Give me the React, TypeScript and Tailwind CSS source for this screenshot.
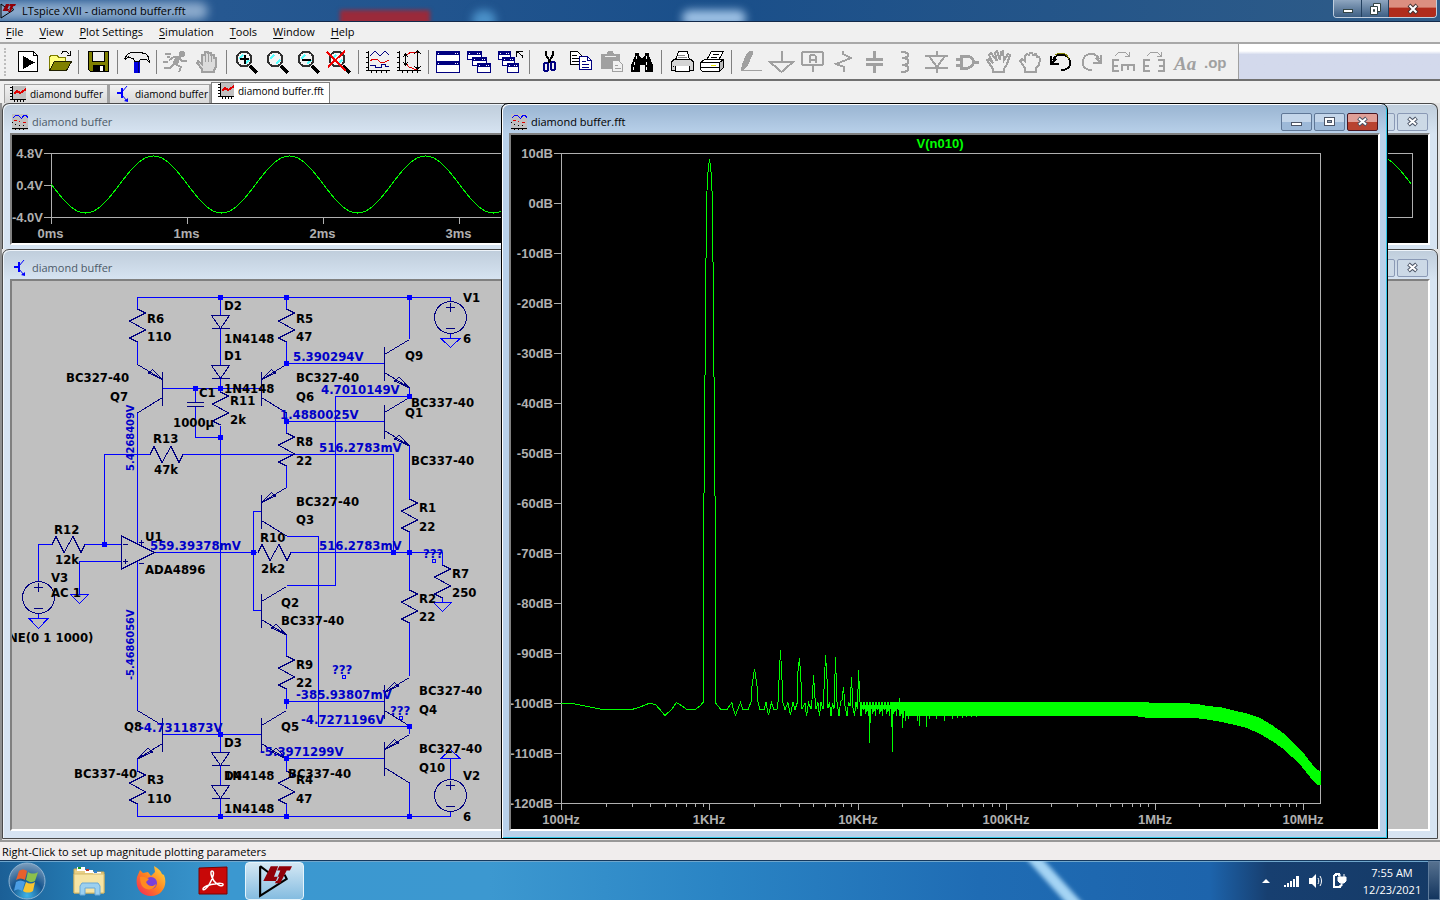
import type { ReactNode } from "react";
import clsx from "clsx";

const G = "#a0a0a0";
const NAVY = "#000080";

const menus = ["File", "View", "Plot Settings", "Simulation", "Tools", "Window", "Help"];

/* ---------- toolbar icons, drawn on a 31x24 grid ---------- */

const lens = (
  <>
    <path d="M20 16l7 7" stroke="#000" strokeWidth="3" />
    <circle cx="14" cy="9" r="7.5" fill="#f4f4f4" stroke="#303030" strokeWidth="2" />
    <path d="M9 9l4-4M15 14l4-4" stroke="#5ff" strokeWidth="2" />
  </>
);

const axes = (
  <path
    d="M6.5 1v20M4 2.5h3M4 7.5h3M4 12.5h3M4 17.5h3M4 20.5h24M9.5 20v3M14.5 20v3M19.5 20v3M24.5 20v3"
    stroke="#000"
    fill="none"
  />
);

const miniWindow = (x: number, y: number, w: number, h: number) => (
  <>
    <rect x={x + 0.5} y={y + 0.5} width={w - 1} height={h - 1} fill="#fff" stroke={NAVY} />
    <rect x={x} y={y} width={w} height="4" fill={NAVY} />
    <path d={`M${x + 2} ${y + 2.5}h1M${x + w - 5} ${y + 2.5}h1M${x + w - 3} ${y + 2.5}h1`} stroke="#fff" />
  </>
);

type Tool = { name: string; icon: ReactNode; off?: boolean };

const tools: Tool[][] = [
  [
    {
      name: "Run",
      icon: (
        <>
          <path d="M6.5 1.5h15l4 4v16h-19z" fill="#fff" stroke="#000" />
          <path d="M21.5 1.5v4h4" fill="none" stroke="#000" />
          <path d="M11 6l12 6.500-12 6.500z" fill="#000" />
        </>
      ),
    },
    {
      name: "Open",
      icon: (
        <>
          <path d="M6.500 19V7l2-2h5l2 2h7v4" fill="#ffff80" stroke="#7c7c00" />
          <path d="M6.500 20.500l5-9h17l-5 9z" fill="#808000" stroke="#202000" />
          <path d="M18 4c2-4 6-3 8 0M27.500 1v4h-4" fill="none" stroke="#000" />
        </>
      ),
    },
  ],
  [
    {
      name: "Save",
      icon: (
        <>
          <path d="M6.500 1.500h20v20h-18l-2-2z" fill="#808000" stroke="#000" />
          <rect x="10.500" y="1.500" width="12" height="10" fill="#f0f0f0" stroke="#000" />
          <rect x="11" y="15" width="12" height="6" fill="#000" />
          <rect x="18" y="16" width="3" height="5" fill="#fff" />
        </>
      ),
    },
  ],
  [
    {
      name: "Control Panel",
      icon: (
        <>
          <path d="M13 10h6v13h-6z" fill="#0000e0" />
          <path d="M17.500 10v13" stroke="#000070" />
          <path d="M3.500 8.500l3-4 4-2.500h8l3 1h3l3 4 1 5-4-3h-5l-1 2h-5l-1-2-5-2-3 2z" fill="#ececec" stroke="#000" />
        </>
      ),
    },
  ],
  [
    {
      name: "Run simulation",
      off: true,
      icon: (
        <>
          <path d="M13 7l6 0-4 7 6 3-2 5M15 13l-5 5H4M19 7l3 4h5M14 7l-5 3M5 4h6M7 7h3M3 12h5" fill="none" stroke={G} strokeWidth="2" />
          <circle cx="22" cy="4" r="3" fill={G} />
          <path d="M16 7l4 1-3 7-4-2z" fill={G} stroke={G} />
        </>
      ),
    },
    {
      name: "Halt",
      off: true,
      icon: (
        <>
          <path d="M11 22v-3l-5-6 1-2 4 3V5h3V2h3v1h3v2h3v3h2v9l-2 3v2z" fill="#dcdcdc" stroke={G} strokeWidth="2" />
          <path d="M14 5v7M17 4v8M20 6v6" stroke={G} />
        </>
      ),
    },
  ],
  [
    {
      name: "Zoom in",
      icon: (
        <>
          {lens}
          <path d="M10 9h9M14.500 5v9" stroke="#000" strokeWidth="2" />
        </>
      ),
    },
    { name: "Pan", icon: lens },
    {
      name: "Zoom out",
      icon: (
        <>
          {lens}
          <path d="M10 10h9" stroke="#000" strokeWidth="2" />
        </>
      ),
    },
    {
      name: "Zoom full",
      icon: (
        <>
          {lens}
          <path d="M4 2l19 19M22 1L5 17" stroke="#f00000" strokeWidth="2" />
        </>
      ),
    },
  ],
  [
    {
      name: "Autorange",
      icon: (
        <>
          {axes}
          <path d="M8 6l5-5 5 5 5-5 4 4" fill="none" stroke={NAVY} />
          <path d="M8 11l3-2h4l3 3h5l4-2" fill="none" stroke="#e00000" />
          <path d="M8 15.500h5v2h6v-3h4v2h4" fill="none" stroke={NAVY} />
        </>
      ),
    },
    {
      name: "Autorange Y",
      icon: (
        <>
          {axes}
          <path d="M12 6l6-4h8M12 12l4 5 8 3" fill="none" stroke="#e00000" strokeWidth="1" />
          <path d="M12.500 5v9M10 7l2.500-3 2.500 3M10 12l2.500 3 2.500-3M24.500 1v18M21 4l3.500-3 3.500 3M21 16l3.500 3 3.500-3" fill="none" stroke="#000" />
        </>
      ),
    },
  ],
  [
    {
      name: "Tile windows",
      icon: (
        <>
          {miniWindow(4, 1, 24, 11)}
          {miniWindow(4, 11, 24, 12)}
        </>
      ),
    },
    {
      name: "Cascade windows",
      icon: (
        <>
          {miniWindow(4, 1, 15, 9)}
          {miniWindow(9, 7, 15, 9)}
          {miniWindow(14, 13, 14, 10)}
        </>
      ),
    },
    {
      name: "Close windows",
      icon: (
        <>
          {miniWindow(4, 1, 13, 9)}
          {miniWindow(8, 7, 13, 9)}
          {miniWindow(13, 13, 12, 10)}
          <path d="M28.500 8v-2l-5-4M22.500 7V1.500h6" fill="none" stroke="#000" />
        </>
      ),
    },
  ],
  [
    {
      name: "Cut",
      icon: (
        <>
          <path d="M13 1v4l5 8M20 1v4l-5 8" fill="none" stroke="#000" strokeWidth="2" />
          <ellipse cx="13" cy="17" rx="2.500" ry="4" fill="none" stroke={NAVY} strokeWidth="2" />
          <ellipse cx="20" cy="16" rx="2.500" ry="4" fill="none" stroke={NAVY} strokeWidth="2" />
        </>
      ),
    },
    {
      name: "Copy",
      icon: (
        <>
          <path d="M6.500 1.500h7l4 4v9h-11z" fill="#fff" stroke="#000" />
          <path d="M8 5.500h5M8 8.500h7M8 11.500h7" stroke="#000" />
          <path d="M15.500 6.500h8l4 4v9h-12z" fill="#fff" stroke={NAVY} />
          <path d="M23.500 6.500v4h4M18 11.500h4M18 14.500h7M18 17h7" fill="none" stroke={NAVY} />
        </>
      ),
    },
    {
      name: "Paste",
      off: true,
      icon: (
        <>
          <path d="M6 4h6l1-3h5l1 3h6v15H6z" fill={G} />
          <path d="M10 6h11" stroke="#f0f0f0" />
          <path d="M17.500 10.500h6l4 4v7h-10z" fill="#f0f0f0" stroke={G} />
          <path d="M20 15.500h3M20 18.500h6" stroke={G} />
        </>
      ),
    },
    {
      name: "Find",
      icon: (
        <>
          <path d="M9 3h4v3h1l2 3 2-3h1V3h4v3l4 9v7h-8v-7h-5v7H5v-7l4-9z" fill="#000" />
          <path d="M10 2h3M20 2h3M10.500 6v3M8.500 12v3M7.500 17v3M20.500 6v3M20.500 12v3M20.500 17v3" stroke="#fff" strokeWidth="1" />
        </>
      ),
    },
  ],
  [
    {
      name: "Print setup",
      icon: (
        <>
          <path d="M10.500 10l3-8.500h9l2 8.500" fill="#fff" stroke="#000" />
          <path d="M6.500 12l3-3h16l3 3v8h-22z" fill="#d4d4d4" stroke="#000" />
          <path d="M9 16.500h-1M10.500 16v5.500h14V16" fill="#fff" stroke="#000" />
          <path d="M13 5h7M13 7h9" stroke="#888" />
        </>
      ),
    },
    {
      name: "Print",
      icon: (
        <>
          <path d="M10.500 10l5-8.500h12l-5 8.500" fill="#fff" stroke="#000" />
          <path d="M17 4.500h6M15 7h6" stroke="#000" />
          <path d="M4.500 12.500l4-3h19l-4 3z" fill="#fff" stroke="#000" />
          <path d="M4.500 12.500h19v9h-17l-2-2z" fill="#fff" stroke="#000" />
          <path d="M23.500 12.500l4-3v8l-4 4z" fill="#bbb" stroke="#000" />
          <path d="M4.500 17.500h19" stroke="#000" />
          <path d="M15 15.500h5" stroke="#e8e800" />
        </>
      ),
    },
  ],
  [
    {
      name: "Wire",
      off: true,
      icon: (
        <>
          <path d="M6 20l1-6 5-11 2-2h4v3l-5 11-5 5z" fill={G} />
          <path d="M6 20.500h21" stroke={G} />
        </>
      ),
    },
    { name: "Ground", off: true, icon: <path d="M15.500 1v11M4 12h23L15.500 22z" fill="none" stroke={G} strokeWidth="2" /> },
    {
      name: "Label net",
      off: true,
      icon: (
        <>
          <rect x="5" y="2" width="21" height="13" rx="2" fill="none" stroke={G} strokeWidth="2" />
          <path d="M15.500 15v7M12.500 13V6l2-1h3l1 1v7M12 9.500h7" fill="none" stroke={G} strokeWidth="2" />
        </>
      ),
    },
    { name: "Resistor", off: true, icon: <path d="M15 1v3l8 4-15 6 8 3v5" fill="none" stroke={G} strokeWidth="2" /> },
    { name: "Capacitor", off: true, icon: <path d="M15.500 1v8M7 9.500h17M7 14.500h17M15.500 15v8" fill="none" stroke={G} strokeWidth="3" /> },
    {
      name: "Inductor",
      off: true,
      icon: <path d="M11 2h4l3 2v2l-3 2h-3h3l3 2v3l-3 2h-3h3l3 2v3l-3 2h-4" fill="none" stroke={G} strokeWidth="2" />,
    },
    {
      name: "Diode",
      off: true,
      icon: <path d="M4 5.500h23M8 6l8 11 8-11M4 17.500h23M15.500 1v5M15.500 17v6" fill="none" stroke={G} strokeWidth="2" />,
    },
    {
      name: "Component",
      off: true,
      icon: <path d="M9 6h7l4 2 2 4-2 4-4 2H9zM4 9h5M4 15h5M22 12h5" fill="none" stroke={G} strokeWidth="3" />,
    },
    {
      name: "Move",
      off: true,
      icon: <path d="M10 22v-3L4 10l2-1 4 4-4-8 2-2 6 8-2-8 2-2 3 9 1-8 2-1 1 9 4-6 2 1-3 9-3 5v3z" fill="none" stroke={G} strokeWidth="2" />,
    },
    {
      name: "Drag",
      off: true,
      icon: <path d="M11 22v-4l-5-7 2-2 3 2V6l2-2 2 1 1-2h2l1 2 3-1 1 3 2 0 1 2-1 6-3 3v4z" fill="none" stroke={G} strokeWidth="2" />,
    },
    {
      name: "Undo",
      icon: (
        <>
          <path d="M8 10c3-8 17-7 17 3 0 5-4 7-9 7" fill="none" stroke="#000" strokeWidth="2" />
          <path d="M10 5c4-3 12-3 14 4" fill="none" stroke="#808000" />
          <path d="M6 6v8h8M6 14l5-5" fill="none" stroke="#000" strokeWidth="2" />
        </>
      ),
    },
    {
      name: "Redo",
      off: true,
      icon: <path d="M23 9C20 1 6 2 7 13c0 5 4 7 9 7M25 5v8h-8M25 13l-5-5" fill="none" stroke={G} strokeWidth="2" />,
    },
    {
      name: "Mirror",
      off: true,
      icon: (
        <>
          <path d="M12 10H6v11h6M6 16h5M15 21v-6h12v6M21 15v5" fill="none" stroke={G} strokeWidth="2" />
          <path d="M8 6l4-4h6l4 4M22 2v4h-4" fill="none" stroke={G} />
        </>
      ),
    },
    {
      name: "Rotate",
      off: true,
      icon: (
        <>
          <path d="M12 10H6v11h6M6 16h5M20 10h6v11h-6M26 16h-5" fill="none" stroke={G} strokeWidth="2" />
          <path d="M9 6l4-4h6l4 4M23 2v4h-4" fill="none" stroke={G} />
        </>
      ),
    },
    {
      name: "Text",
      off: true,
      icon: (
        <text x="5" y="20" fontFamily="Liberation Serif, serif" fontSize="19" fontStyle="italic" fontWeight="bold" fill={G}>
          Aa
        </text>
      ),
    },
    {
      name: "SPICE directive",
      off: true,
      icon: (
        <text x="4" y="18" fontFamily="Liberation Sans, sans-serif" fontSize="15" fontWeight="bold" fill={G}>
          .op
        </text>
      ),
    },
  ],
];

/* ---------- small icons ---------- */

function TabPlotIcon() {
  return (
    <svg width="16" height="16" viewBox="0 0 16 16" shapeRendering="crispEdges" className="shrink-0">
      <path d="M2 0h14v14H2z" fill="#c0c0c0" />
      <path d="M2.500 0v14M0 1.500h3M0 4.500h3M0 7.500h3M0 10.500h3M0 13.500h16M4.500 14v2M7.500 14v2M10.500 14v2M13.500 14v2" stroke="#000" />
      <path d="M4 8l3-3 3 2 2-1 4-3" fill="none" stroke="#e00000" strokeWidth="2" />
    </svg>
  );
}

function PlotIcon() {
  return (
    <svg width="16" height="16" viewBox="0 0 16 16" shapeRendering="crispEdges" className="shrink-0">
      <path d="M0 0h16v16H0z" fill="#c0c0c0" />
      <path d="M1 4l3-3h2l3 3h1l2-3h2l2 3" fill="none" stroke="#0000ff" />
      <path d="M2 6.500h3M7 7.500h1M11 8.500h3" stroke="#e00000" />
      <path d="M0 8.500h1M3 10.500h1M7 11.500h1M11 11.500h1M0 14.500h16M3.500 15v1M7.500 15v1M11.500 15v1" stroke="#000" />
    </svg>
  );
}

function SchematicIcon() {
  return (
    <svg width="16" height="16" viewBox="0 0 16 16" className="shrink-0">
      <path d="M2 7h5M7 2v10" stroke="#0000ff" strokeWidth="2" />
      <path d="M7 6l5-6M7 9l5 6" fill="none" stroke="#0000ff" strokeWidth="1" />
      <path d="M13 16v-4l-4 3z" fill="#0000ff" />
    </svg>
  );
}

function LtLogo({ size }: { size: number }) {
  return (
    <svg width={size} height={size} viewBox="0 0 32 32" className="shrink-0">
      <path d="M2 2v28l25-16-2-4M2 2l8 6" fill="none" stroke="#000" strokeWidth="2" />
      <path d="M12 2L5 16h13l2-4h-5l4-10zM20 2h12l-2 4h-3l-6 12h-5l5-12h-3z" fill="#900008" />
    </svg>
  );
}

/* ---------- document windows ---------- */

const glyphs = {
  min: <rect x="10.500" y="9.500" width="10" height="3" fill="#fff" stroke="#4c5566" />,
  max: (
    <>
      <rect x="10.500" y="4.500" width="10" height="8" fill="#fff" stroke="#4c5566" />
      <rect x="13.500" y="7.500" width="4" height="2" fill="#9ab" stroke="#4c5566" />
    </>
  ),
  close: (
    <>
      <path d="M11.500 5l8 7M19.500 5l-8 7" stroke="#4c5566" strokeWidth="4" />
      <path d="M12 5.500l7 6M19 5.500l-7 6" stroke="#fff" strokeWidth="2" />
    </>
  ),
};

function CaptionButton({ kind, active }: { kind: keyof typeof glyphs; active?: boolean }) {
  return (
    <button
      aria-label={kind}
      className={clsx(
        "flex h-[18px] w-[31px] items-center justify-center rounded-[2px] border",
        !active && "border-[#8a99b5] bg-[#ccd9e6]",
        active && kind === "close" && "border-[#4a1520] bg-gradient-to-b from-[#e0a098] from-50% to-[#b84330] to-50%",
        active && kind !== "close" && "border-[#5f7796] bg-gradient-to-b from-[#c4d6ea] from-50% to-[#9db9d8] to-50%"
      )}
    >
      <svg width="31" height="17" viewBox="0 0 31 17" className="shrink-0">
        {glyphs[kind]}
      </svg>
    </button>
  );
}

type DocProps = {
  title: string;
  icon: ReactNode;
  active?: boolean;
  dark?: boolean;
  className?: string;
  children: ReactNode;
};

function DocWindow({ title, icon, active, dark, className, children }: DocProps) {
  return (
    <section
      className={clsx(
        "flex flex-col rounded-t-[7px] border px-[7px]",
        active
          ? "border-black bg-[#b9d1ea] bg-gradient-to-b from-[#99b4d1] to-[#b9d1ea] to-[30px] shadow-[inset_1px_1px_0_#fff,inset_-1px_-1px_0_#30c8e8]"
          : "border-[#4a4a4a] bg-gradient-to-b from-[#bfcddb] to-[#d7e4f2] to-[30px] shadow-[inset_1px_1px_0_#eef4fa]",
        className
      )}
    >
      <header className="flex h-[29px] shrink-0 items-center gap-1 px-0.5 pt-1.5">
        {icon}
        <h2 className={clsx("flex-1 text-[11px] leading-4", active ? "text-black" : "text-[#4c5a68]")}>{title}</h2>
        <div className="flex gap-0.5">
          <CaptionButton kind="min" active={active} />
          <CaptionButton kind="max" active={active} />
          <CaptionButton kind="close" active={active} />
        </div>
      </header>
      <div
        className={clsx(
          "min-h-0 flex-1 overflow-hidden border-2 border-t-[#808080] border-r-white border-b-white border-l-[#808080]",
          dark ? "bg-black" : "bg-[#c0c0c0]"
        )}
      >
        {children}
      </div>
    </section>
  );
}

/* ---------- plots ---------- */

const AXIS = "#b0b0b0";
const TRACE = "#00ff00";

const plotText = {
  fontFamily: "Liberation Sans, Arial, sans-serif",
  fontSize: 13,
  fontWeight: "bold",
  fill: AXIS,
};

function WavePlot() {
  const points = Array.from({ length: 681 }, (_, i) => {
    const x = i * 2;
    return `${51.5 + x},${(184.5 + 28.5 * Math.sin((x / 136) * 2 * Math.PI)).toFixed(1)}`;
  }).join(" ");
  return (
    <svg viewBox="12 135 1416 108" className="block h-full w-full" shapeRendering="crispEdges">
      <path d="M44 153.500H1412.500V217.500M44 185.500h7M44 217.500H1412.500M51.500 153v71" fill="none" stroke={AXIS} />
      {[0, 1, 2, 3, 4, 5, 6, 7, 8, 9].map((ms) => (
        <g key={ms}>
          <path d={`M${51.5 + ms * 136} 217v7`} stroke={AXIS} />
          <text {...plotText} x={50.5 + ms * 136} y="238" textAnchor="middle">
            {ms}ms
          </text>
        </g>
      ))}
      {["4.8V", "0.4V", "-4.0V"].map((v, i) => (
        <text key={v} {...plotText} x="43" y={158 + i * 32} textAnchor="end">
          {v}
        </text>
      ))}
      <polyline points={points} fill="none" stroke={TRACE} />
    </svg>
  );
}

const lowBand =
  "561,703 572,703.5 590,707 603,709.5 632,709.5 640,707 650,703 656,705 665,715.5 672,709 676.5,702.5 682,706 687,709.5 695,709.5 700,706 703.5,702 703.5,560 704.5,430 705.5,323 706.5,200 708,172 709.5,159 711,172 712.5,200 713.5,323 714.5,430 715.5,560 715.5,703 717,705 721,709.5 727,709.5 730,705 732,702.5 733,708 735.5,715 738,709 740.5,702.5 743,709.5 748,709.5 751,702 752,686 754.5,669 757,686 758,702 760,709.5 764,709.5 766,702.5 768.5,715 771.5,702.5 774,709.5 777,709 778.5,699 779,680 780.5,650 782,680 783,703 785,709.5 788,702.5 790.5,715 793,702.5 795,709.5 797.5,702 798,671 799.5,658 801,682 802,709 805,703 806.5,716 808.5,702.5 811,709 812.5,695 813.5,675 815,698 816,709 818,702.5 819.5,716 821,702 823,709 824.5,679 825.5,655 827,679 828,708 829.5,702 831,716 832.5,703 834,709 835.5,657 837,702 839,716 840.5,702 842,700 843.5,687 845,706 847,716 848.5,702 850,706 851.5,677 853,708 854.5,716 856,702 857.5,709 858.5,670 860,702 861,716";

const band =
  "M906 702H1149V703H1183L1197 704 1208 706 1222 707.500 1232 710 1245 713 1260 718 1272 725 1283 733 1294 743 1305 755 1312 764 1317 770 1320.500 771V785H1317L1310 777 1302 767 1292 757 1282 748 1272 741 1260 734 1247 728 1235 725 1222 722 1204 719 1193 718H1149L1134 716H906z";

const dips = [
  [869.5, 743], [870.5, 723], [891.5, 727], [892.5, 752], [899.5, 716], [902.5, 728], [905.5, 721], [908.5, 719],
  [917.5, 721], [919.5, 726], [926.5, 727], [929.5, 719], [936.5, 719], [944.5, 721], [952.5, 719], [957.5, 718],
  [962.5, 718], [966.5, 717], [971.5, 717], [976.5, 717],
];

const noise = Array.from({ length: 46 }, (_, i) => {
  const top = i % 3 === 1 && i < 30 ? 705 : 702;
  const bottom = [716, 709, 711, 710, 712, 709, 714][(i * 5) % 7] + (i > 38 ? 2 : 0);
  return `M${861.5 + i} ${top}V${bottom}`;
}).join("");

const decades = ["100Hz", "1KHz", "10KHz", "100KHz", "1MHz", "10MHz"];
const DECADE = 148.4;

function FftPlot() {
  const ticks: number[] = [];
  decades.forEach((_, d) => {
    for (let n = 2; n < 10; n++) {
      const x = 561 + DECADE * (d + Math.log10(n));
      if (x < 1320) ticks.push(Math.round(x) + 0.5);
    }
  });
  return (
    <svg viewBox="511 135 867 694" className="block h-full w-full" shapeRendering="crispEdges">
      <path d="M554 153.500H1320.500V803.500H554M561.500 153v657" fill="none" stroke={AXIS} />
      {Array.from({ length: 14 }, (_, i) => (
        <g key={i}>
          <path d={`M554 ${153.5 + i * 50}h7`} stroke={AXIS} />
          <text {...plotText} x="553" y={158 + i * 50} textAnchor="end">
            {10 - i * 10}dB
          </text>
        </g>
      ))}
      {ticks.map((x) => (
        <path key={x} d={`M${x} 803v4`} stroke={AXIS} />
      ))}
      {decades.map((label, i) => (
        <g key={label}>
          <path d={`M${Math.round(561 + i * DECADE) + 0.5} 803v7`} stroke={AXIS} />
          <text {...plotText} x={561 + Math.round(i * DECADE)} y="824" textAnchor="middle">
            {label}
          </text>
        </g>
      ))}
      <text {...plotText} x="940" y="148" textAnchor="middle" fill={TRACE}>
        V(n010)
      </text>
      <polyline points={lowBand} fill="none" stroke={TRACE} />
      <path d={noise} stroke={TRACE} />
      <path d="M899.500 698v6" stroke={TRACE} />
      {dips.map(([x, y]) => (
        <path key={x} d={`M${x} 703V${y}`} stroke={TRACE} />
      ))}
      <path d={band} fill={TRACE} />
    </svg>
  );
}

/* ---------- schematic ---------- */

const wires = [
  "M137.500 309V297.500H450.500V302M137.500 342V364M137.500 412V544M137.500 562V709.500M137.500 758.500V771M137.500 804V816.500H450.500V811",
  "M162.500 388.500H261.500M195.500 388V402M195.500 407V437.500H220.500M220.500 297V315M220.500 328V365M220.500 377V392M220.500 426V752M220.500 765V785M220.500 798V816",
  "M38.500 581V544.500H52M84 544.500H121M104.500 544V454.500H150M182 454.500H393.500V552M38.500 614V618M121 561.500H79.500V594",
  "M154.500 552.500H257M253.500 511V610.500H261M253.500 511.500H261M290 552.500H442.500V565M442.500 598V602",
  "M286.500 297V309M286.500 342V363.500H384M286.500 412V433M286.500 421.500H384M286.500 466V487.500M286.500 536.500H318.500V726.500H409.500",
  "M409.500 339V297M409.500 388V396.500H335.500V585.500H286.500M409.500 445V499M409.500 532V590M409.500 622V676M409.500 726V734M409.500 783V816",
  "M286.500 635V656M286.500 688V709M286.500 701.500H384M162.500 734.500H261M286.500 758.500H384M286.500 758V771M286.500 804V816M450.500 334V338M450.500 779V758",
];

const nodes = [
  [220, 297], [286, 297], [409, 297], [286, 363], [195, 388], [220, 388], [409, 396], [286, 421], [220, 437],
  [104, 544], [253, 552], [393, 552], [409, 552], [286, 701], [409, 726], [220, 734], [286, 758], [220, 816],
  [286, 816], [409, 816],
];

// x, y of the top (or left) end of each resistor
const vertical = [
  [137.5, 309], [220.5, 392], [286.5, 309], [286.5, 433], [409.5, 499], [442.5, 565], [409.5, 590], [286.5, 656],
  [286.5, 771], [137.5, 771],
];
const horizontal = [[52, 544.5], [150, 454.5], [258, 552.5]];

const zig = "M0 0l8 4-16 8 16 9-16 8 8 4";

const transistors: [number, number, "npn" | "pnp", boolean?][] = [
  [162.5, 388.5, "pnp", true],
  [261.5, 388.5, "pnp"],
  [261.5, 511.5, "pnp"],
  [261.5, 610.5, "npn"],
  [384.5, 363.5, "npn"],
  [384.5, 421.5, "npn"],
  [384.5, 701.5, "pnp"],
  [384.5, 758.5, "pnp"],
  [261.5, 734.5, "npn"],
  [162.5, 734.5, "npn", true],
];

const labels: [string, number, number][] = [
  ["R6", 147, 323], ["110", 147, 341], ["D2", 224, 310], ["1N4148", 224, 343], ["D1", 224, 360],
  ["1N4148", 224, 393], ["BC327-40", 66, 382], ["Q7", 110, 401], ["C1", 199, 397], ["R11", 230, 405],
  ["2k", 230, 424], ["1000µ", 173, 427], ["R13", 153, 443], ["47k", 154, 474], ["R12", 54, 534],
  ["12k", 55, 564], ["U1", 145, 541], ["ADA4896", 145, 574], ["V3", 51, 582], ["AC 1", 51, 597],
  ["NE(0 1 1000)", 8, 642], ["R5", 296, 323], ["47", 296, 341], ["BC327-40", 296, 382], ["Q6", 296, 401],
  ["Q9", 405, 360], ["BC337-40", 411, 407], ["Q1", 405, 417], ["R8", 296, 446], ["22", 296, 465],
  ["BC337-40", 411, 465], ["BC327-40", 296, 506], ["Q3", 296, 524], ["R10", 260, 542], ["2k2", 261, 573],
  ["R1", 419, 512], ["22", 419, 531], ["R7", 452, 578], ["250", 452, 597], ["R2", 419, 603],
  ["22", 419, 621], ["Q2", 281, 607], ["BC337-40", 281, 625], ["R9", 296, 669], ["22", 296, 687],
  ["Q5", 281, 731], ["BC327-40", 419, 695], ["Q4", 419, 714], ["BC327-40", 419, 753], ["Q10", 419, 772],
  ["BC337-40", 288, 778], ["R4", 296, 784], ["47", 296, 803], ["V2", 463, 780], ["6", 463, 821],
  ["V1", 463, 302], ["6", 463, 343], ["Q8", 124, 731], ["D3", 224, 747], ["1N4148", 224, 780],
  ["D4", 224, 780], ["1N4148", 224, 813], ["BC337-40", 74, 778], ["R3", 147, 784], ["110", 147, 803],
];

const voltages: [string, number, number][] = [
  ["5.390294V", 293, 361], ["4.7010149V", 321, 394], ["1.4880025V", 280, 419], ["516.2783mV", 319, 452],
  ["559.39378mV", 150, 550], ["516.2783mV", 319, 550], ["???", 423, 558], ["???", 332, 674],
  ["-385.93807mV", 296, 699], ["???", 390, 715], ["-4.7271196V", 301, 724], ["-4.7311873V", 139, 732],
  ["-5.3971299V", 260, 756],
];

function Source({ x, y }: { x: number; y: number }) {
  return (
    <g transform={`translate(${x} ${y})`}>
      <circle r="16" />
      <path d="M-5-10h9M0-15v9M-5 11h9" />
    </g>
  );
}

function Schematic() {
  return (
    <svg
      width="489"
      height="548"
      viewBox="12 281 489 548"
      className="block"
      fontFamily="DejaVu Sans Condensed, DejaVu Sans, sans-serif"
      fontSize="13"
      fontWeight="bold"
    >
      <g fill="none" stroke="#0000ff" shapeRendering="crispEdges">
        <path d={wires.join("")} />
        <path d="M29 618.500h19l-9.500 10zM70.500 594.500h18l-9 9zM433.500 602.500h18l-9 9zM441 338.500h19l-9.500 9zM441 758.500h19l-9.500-9z" />
        <path d="M432 559h3v3h-3zM342 675h3v3h-3zM399 716h3v3h-3z" />
      </g>
      <g fill="none" stroke={NAVY} shapeRendering="crispEdges">
        {vertical.map(([x, y]) => (
          <path key={`${x}-${y}`} d={zig} transform={`translate(${x} ${y})`} />
        ))}
        {horizontal.map(([x, y]) => (
          <path key={`${x}-${y}`} d={zig} transform={`translate(${x} ${y}) rotate(-90)`} />
        ))}
        {transistors.map(([x, y, kind, flip]) => (
          <g key={`${x}-${y}`} transform={`translate(${x} ${y}) scale(${flip ? -1 : 1} 1)`}>
            <path d="M0-17V17M0-9l25-15M0 9l25 15.500" />
            <path d={kind === "npn" ? "M25 24.500L10 17.500l4.500-4z" : "M0-9l10-10 4 3.500z"} />
          </g>
        ))}
        {[315.5, 365.5, 752.5, 785.5].map((y) => (
          <path key={y} d={`M211.500 ${y}h18l-9 13zM211.500 ${y + 13}h18`} />
        ))}
        <path d="M187 402.500h17M187 406.500h17" />
        <path d="M121.500 536v33l33-16.500zM123 544.500h5M123 561.500h5M125.500 559v5M139 542.500h5M141.500 540v5M139 563.500h5" />
        <Source x={38.5} y={597.5} />
        <Source x={450.5} y={317.5} />
        <Source x={450.5} y={795.5} />
      </g>
      {nodes.map(([x, y]) => (
        <rect key={`${x}-${y}`} x={x - 2} y={y - 2} width="5" height="5" fill="#0000ff" />
      ))}
      {labels.map(([t, x, y], i) => (
        <text key={i} x={x} y={y}>
          {t}
        </text>
      ))}
      <g fill="#0000c8">
        {voltages.map(([t, x, y], i) => (
          <text key={i} x={x} y={y}>
            {t}
          </text>
        ))}
        <g fontSize="11">
          <text transform="translate(134 471) rotate(-90)">5.4268409V</text>
          <text transform="translate(134 680) rotate(-90)">-5.4686056V</text>
        </g>
      </g>
    </svg>
  );
}

/* ---------- frame ---------- */

function TitleBar() {
  return (
    <header className="relative flex h-[22px] shrink-0 items-center overflow-hidden border-b border-[#12294a] bg-gradient-to-r from-[#2b5c94] via-[#1a4f8a] to-[#2f5c88]">
      <div className="absolute top-0.5 -left-4 h-[18px] w-56 rounded-full bg-[#a4bedb]/80 blur-[5px]" />
      <div className="absolute top-2.5 left-[340px] h-4 w-[90px] bg-[#9a2a3a] blur-[2px]" />
      <div className="absolute top-2.5 left-[472px] h-5 w-6 rounded-full bg-[#4a90c8] blur-[4px]" />
      <div className="absolute top-2.5 left-[682px] h-4 w-16 rounded-full bg-[#9cc0e4] blur-[4px]" />
      <div className="relative flex flex-1 items-center gap-1.5">
        <LtLogo size={16} />
        <h1 className="text-[11px] leading-5 text-black">LTspice XVII - diamond buffer.fft</h1>
      </div>
      <div className="relative mr-[3px] flex h-[18px] self-start overflow-hidden rounded-b border border-t-0 border-[#c0cede]">
        <button aria-label="Minimize" className="flex w-7 items-center justify-center border-r border-[#23405f] bg-gradient-to-b from-[#8fa6c0] to-[#3d5f84]">
          <svg width="12" height="12" viewBox="0 0 12 12">
            <rect x="1.500" y="6.500" width="9" height="3" fill="#fff" stroke="#344" />
          </svg>
        </button>
        <button aria-label="Restore" className="flex w-[27px] items-center justify-center border-r border-[#23405f] bg-gradient-to-b from-[#8fa6c0] to-[#3d5f84]">
          <svg width="12" height="12" viewBox="0 0 12 12" fill="#fff" stroke="#344">
            <path d="M4.500.5h7v8h-7z" />
            <path d="M1.500 3.500h7v8h-7z" />
            <path d="M4.500 6.500h1v2h-1z" />
          </svg>
        </button>
        <button aria-label="Close" className="flex w-[47px] items-center justify-center bg-gradient-to-b from-[#dc8f80] from-40% to-[#b02c1c] to-50%">
          <svg width="14" height="12" viewBox="0 0 14 12">
            <path d="M3 2l8 8M11 2l-8 8" stroke="#433" strokeWidth="4" />
            <path d="M3.500 2.500l7 7M10.500 2.500l-7 7" stroke="#fff" strokeWidth="2" />
          </svg>
        </button>
      </div>
    </header>
  );
}

function Toolbar() {
  return (
    <div className="flex h-[39px] shrink-0 border-t-2 border-b-2 border-t-[#a8a8a8] border-b-[#707070] bg-gradient-to-b from-white from-20% to-[#d3d9ec] to-30%">
      <div className="flex items-center border-r border-[#a0a0a0] bg-[#f0f0f0] pl-1">
        <div className="mr-1.5 h-7 w-0.5 border-l-2 border-dotted border-[#bcbcbc]" />
        {tools.map((group, g) => (
          <div key={g} className="flex items-center">
            {group.map((tool) => (
              <button key={tool.name} aria-label={tool.name} disabled={tool.off} className="w-[31px]">
                <svg width="31" height="24" viewBox="0 0 31 24" className="block" shapeRendering="crispEdges">
                  {tool.icon}
                </svg>
              </button>
            ))}
            {g < tools.length - 1 ? (
              <div className="mr-[3px] ml-1 h-6 w-px bg-[#808080]" />
            ) : (
              <div className="w-[7px]" />
            )}
          </div>
        ))}
      </div>
    </div>
  );
}

function Tabs() {
  const idle =
    "flex h-[19px] items-center gap-1 border-t border-r-2 border-l border-[#a0a0a0] bg-gradient-to-b from-[#f2f2f2] to-[#d8d8d8] text-[10px]";
  return (
    <nav className="flex h-[22px] shrink-0 items-end bg-[#f0f0f0] pl-1">
      <button className={clsx(idle, "w-[105px] pl-[5px]")}>
        <TabPlotIcon />
        diamond buffer
      </button>
      <button className={clsx(idle, "w-[102px] pl-[5px]")}>
        <SchematicIcon />
        diamond buffer
      </button>
      <button className="flex h-[21px] w-[119px] items-center gap-1 border-t border-r border-l border-[#808080] bg-white pb-1 pl-[6px] text-[10px]">
        <TabPlotIcon />
        diamond buffer.fft
      </button>
    </nav>
  );
}

function Taskbar() {
  return (
    <footer className="relative flex h-10 shrink-0 items-center overflow-hidden border-t border-[#16395e] bg-[linear-gradient(90deg,#1b5f96_0%,#2478b0_5%,#3b98d0_16%,#3c98d0_34%,#2a84c4_50%,#1f6cb4_68%,#1d64ac_84%,#173f70_88%,#153a66_100%)] shadow-[inset_0_1px_0_#6fa6cc]">
      <div className="absolute -top-4 left-[1052px] h-20 w-3 -rotate-[42deg] bg-[#a4d4f4] blur-[2px]" />
      <button aria-label="Start" className="relative ml-2">
        <svg width="38" height="38" viewBox="0 0 38 38">
          <defs>
            <radialGradient id="orb" cx=".5" cy=".9" r=".9">
              <stop offset="0" stopColor="#3fb4e8" />
              <stop offset=".5" stopColor="#16558e" />
              <stop offset="1" stopColor="#7f9fbe" />
            </radialGradient>
          </defs>
          <circle cx="19" cy="19" r="18" fill="url(#orb)" stroke="#8fb4d2" />
          <path d="M11 9c3-2 5-2 8 0l-2 9c-3-2-6-2-9 0z" fill="#e8602c" />
          <path d="M20 10c3 2 7 2 10 0l-3 9c-3 2-6 1-9-1z" fill="#8cc04c" />
          <path d="M8 20c3-2 6-2 9 0l-3 9c-3-2-5-2-8 0z" fill="#4c9ee4" />
          <path d="M18 20c3 2 6 2 9 0l-2 9c-3 2-7 2-10 0z" fill="#f8c430" />
        </svg>
      </button>
      <button aria-label="Explorer" className="relative ml-[27px]">
        <svg width="32" height="32" viewBox="0 0 32 32">
          <path d="M1 4h10l2 3h18v21H1z" fill="#e8cf86" stroke="#c8a850" />
          <path d="M4 2h8v4H4zM12 5h8v3h-8zM20 7h8v3h-8z" fill="#fff" />
          <path d="M5 2h3v2H5z" fill="#20a020" />
          <path d="M13 4h3v2h-3z" fill="#c03020" />
          <path d="M21 6h3v2h-3z" fill="#3080d0" />
          <path d="M1 9h30v19H1z" fill="#f6e4a4" stroke="#d4b868" />
          <path d="M7 30v-9l2-3h16l2 3v9h-5v-7H12v7z" fill="#9cd0f0" stroke="#68a8d8" />
        </svg>
      </button>
      <button aria-label="Firefox" className="relative ml-[30px]">
        <svg width="32" height="32" viewBox="0 0 32 32">
          <defs>
            <linearGradient id="fox" x1="1" y1="0" x2="0" y2="1">
              <stop offset="0" stopColor="#ffe040" />
              <stop offset=".5" stopColor="#ff8020" />
              <stop offset="1" stopColor="#f02060" />
            </linearGradient>
          </defs>
          <path d="M2 12l3-7 3 3 5-1 3 4 4-4-1-6c4 2 7 5 8 8l2 1c4 9-1 21-13 21C5 31 0 22 2 12z" fill="url(#fox)" />
          <circle cx="16" cy="18" r="6" fill="#7a40d8" />
          <path d="M5 12c4-1 6 1 9 2l-3 3c2 5 7 5 10 2-1 6-9 7-13 3-2-2-3-6-3-10z" fill="#ff8a20" />
        </svg>
      </button>
      <button aria-label="Adobe Reader" className="relative ml-[30px]">
        <svg width="32" height="30" viewBox="0 0 32 30">
          <path d="M2 2l28-1v27H2z" fill="#c80808" stroke="#7c0000" />
          <path d="M15 5c3 0 1 7-2 12-3 6-7 8-7 6s7-5 12-5c4-1 9-1 8 1s-6 0-9-4-4-10-2-10z" fill="none" stroke="#fff" strokeWidth="1.500" />
        </svg>
      </button>
      <button
        aria-label="LTspice"
        className="relative ml-4 flex h-[38px] w-[59px] items-center justify-center rounded-sm border border-[#e4f4fc] bg-gradient-to-b from-[#d4e8f4] to-[#84bce0]"
      >
        <LtLogo size={34} />
      </button>
      <div className="relative ml-auto flex h-full items-center text-[11px] leading-[17px] text-white">
        <svg width="8" height="5" viewBox="0 0 8 5">
          <path d="M0 5l4-4 4 4z" fill="#fff" />
        </svg>
        <svg width="16" height="14" viewBox="0 0 16 14" className="ml-3.5" shapeRendering="crispEdges">
          <path d="M0 11h2v2H0zM3 9h2v4H3zM6 7h2v6H6zM9 5h2v8H9zM12 2h3v11h-3z" fill="#fff" />
        </svg>
        <svg width="16" height="16" viewBox="0 0 16 16" className="ml-2">
          <path d="M1 5h3l4-4v14l-4-4H1z" fill="#fff" />
          <path d="M10 5c1 2 1 4 0 6M12 3c2 3 2 7 0 10" fill="none" stroke="#fff" />
        </svg>
        <svg width="16" height="16" viewBox="0 0 16 16" className="ml-2">
          <path d="M2 2h2V1h3v1h1M9 14H2V2" fill="none" stroke="#fff" strokeWidth="2" />
          <path d="M6 4h8v4l-2 2H8L6 8zM8 1v4M12 1v4M10 10v3H7" fill="#fff" stroke="#fff" />
        </svg>
        <div className="ml-3 w-16 text-center">
          <p>7:55 AM</p>
          <p>12/23/2021</p>
        </div>
        <button
          aria-label="Show desktop"
          className="ml-1 h-full w-3 border border-[#5f7c9c] bg-gradient-to-b from-[#56718f] to-[#12355e]"
        />
      </div>
    </footer>
  );
}

export default function App() {
  return (
    <div className="flex h-screen flex-col overflow-hidden bg-[#f0f0f0] font-['Open_Sans',sans-serif] text-black">
      <TitleBar />
      <nav className="flex h-5 shrink-0 items-center gap-4 pl-1.5 text-[11px]">
        {menus.map((m) => (
          <button key={m}>
            <span className="underline underline-offset-2">{m[0]}</span>
            {m.slice(1)}
          </button>
        ))}
      </nav>
      <Toolbar />
      <Tabs />
      <main className="relative flex min-h-0 flex-1 flex-col border-l-2 border-[#909090] bg-[#e4e4e4] pr-0.5 pb-px">
        <DocWindow title="diamond buffer" icon={<PlotIcon />} dark className="h-[146px] shrink-0 border-b-0 pb-1">
          <WavePlot />
        </DocWindow>
        <DocWindow title="diamond buffer" icon={<SchematicIcon />} className="min-h-0 flex-1 pb-[7px]">
          <Schematic />
        </DocWindow>
        <DocWindow
          title="diamond buffer.fft"
          icon={<PlotIcon />}
          active
          dark
          className="absolute top-0 right-[52px] bottom-px left-[499px] pb-[7px]"
        >
          <FftPlot />
        </DocWindow>
      </main>
      <p className="h-5 shrink-0 border-t-2 border-[#989898] bg-[#f0eded] pl-0.5 text-[11px] leading-[19px]">
        Right-Click to set up magnitude plotting parameters
      </p>
      <Taskbar />
    </div>
  );
}
